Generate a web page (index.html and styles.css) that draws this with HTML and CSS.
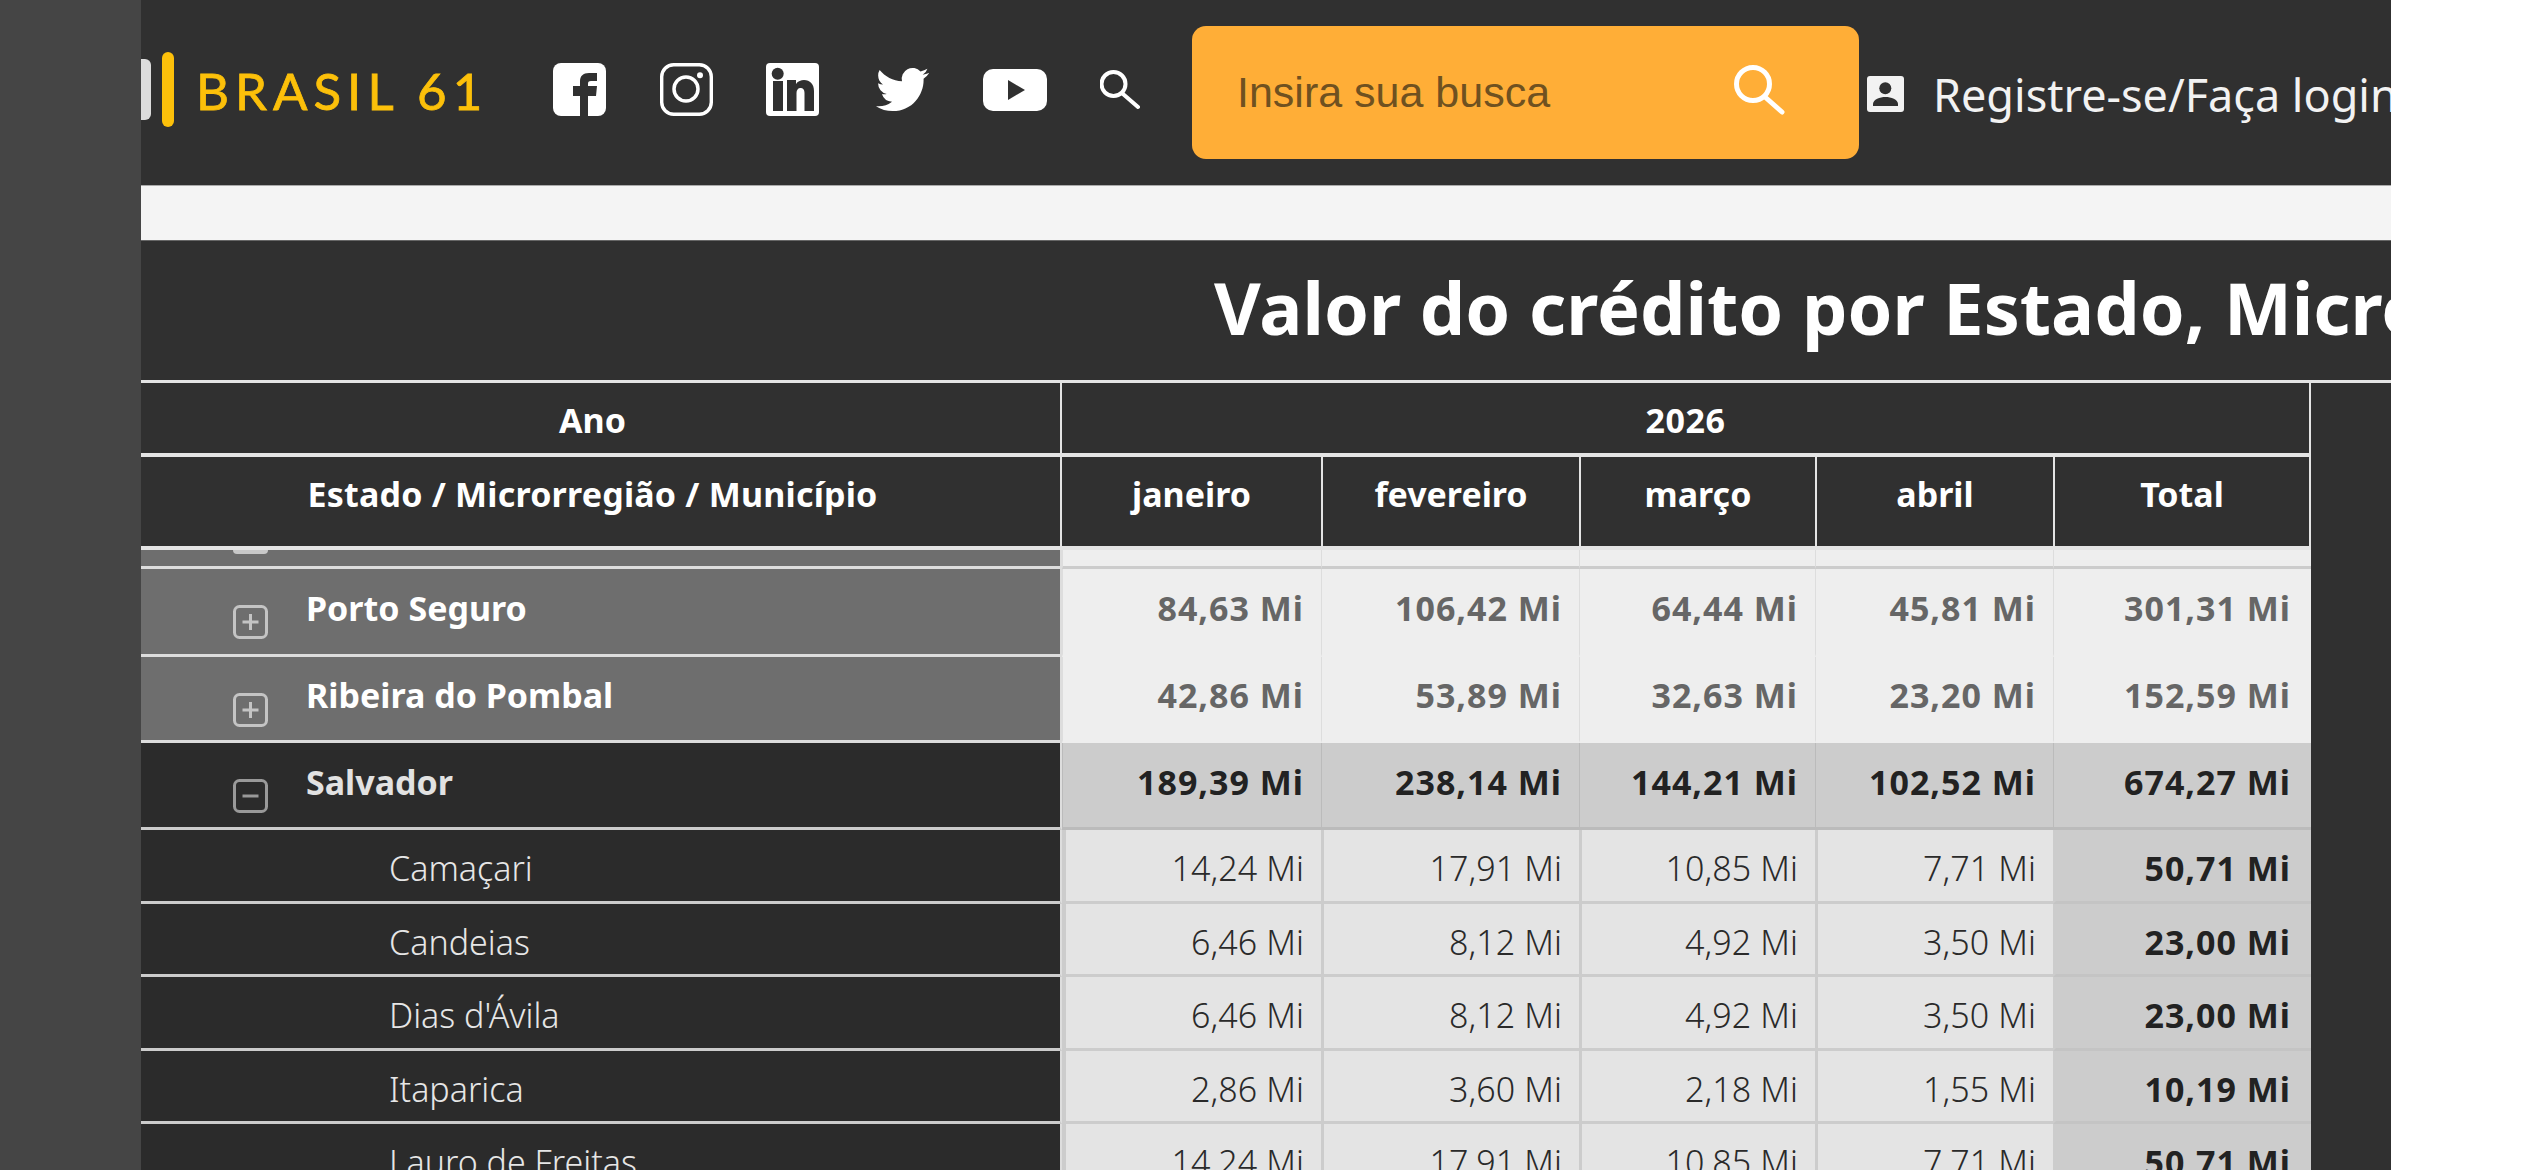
FILE: index.html
```html
<!DOCTYPE html>
<html lang="pt-BR">
<head>
  <meta charset="UTF-8" />
  <title>Brasil 61 - Valor do crédito</title>
  <link rel="stylesheet" href="styles.css">
</head>
<body>

<div class="sidebar"></div>

<div class="main">
  <header class="topbar">
    <div class="logo">
      <span class="logo-gray"></span>
      <span class="logo-yellow"></span>
      <span class="logo-text">BRASIL 61</span>
    </div>

    <svg class="icon" viewBox="0 0 53 53"><rect width="53" height="53" rx="8" fill="#fff"/><path fill="#303030" d="M27 53V33h-7V23h7v-5c0-5 3-8 9-8h8v8h-6c-2.500 0-3 1-3 3v2h9l-1 10h-8v20z"/></svg>
    <svg class="icon icon-ig" viewBox="0 0 53 53"><rect x="1.700" y="1.700" width="49.600" height="49.600" rx="12" fill="none" stroke="#fff" stroke-width="3.400"/><circle cx="26" cy="26" r="12" fill="none" stroke="#fff" stroke-width="3.500"/><circle cx="40" cy="12.300" r="3" fill="#fff"/></svg>
    <svg class="icon" viewBox="0 0 53 53"><rect width="53" height="53" rx="4" fill="#fff"/><circle cx="11.700" cy="10.700" r="6" fill="#303030"/><path fill="#303030" d="M7 18h10v30H7zM21 17h9v4c2-3 5-4 8-4 6 0 10 4 10 11v20h-9.500V30c0-4-2-5-4-5-2.500 0-4 2-4 5v18H21z"/></svg>
    <svg class="icon icon-tw" viewBox="0 0 24 24"><path fill="#fff" d="M23.953 4.570a10 10 0 01-2.825.775 4.958 4.958 0 002.163-2.723c-.951.555-2.005.959-3.127 1.184a4.920 4.920 0 00-8.384 4.482C7.690 8.095 4.067 6.130 1.640 3.162a4.822 4.822 0 00-.666 2.475c0 1.710.870 3.213 2.188 4.096a4.904 4.904 0 01-2.228-.616v.060a4.923 4.923 0 003.946 4.827 4.996 4.996 0 01-2.212.085 4.936 4.936 0 004.604 3.417 9.867 9.867 0 01-6.102 2.105c-.390 0-.779-.023-1.170-.067a13.995 13.995 0 007.557 2.209c9.053 0 13.998-7.496 13.998-13.985 0-.210 0-.420-.015-.630A9.935 9.935 0 0024 4.590z"/></svg>
    <svg class="icon-yt" viewBox="0 0 64 42"><rect width="64" height="42" rx="10" fill="#fff"/><path fill="#303030" d="M25 11l17 10-17 10z"/></svg>
    <svg class="icon-search" viewBox="0 0 40 40"><circle cx="13.500" cy="14" r="12" fill="none" stroke="#fff" stroke-width="4"/><path d="M23 24l15 13" stroke="#fff" stroke-width="4" stroke-linecap="round"/></svg>

    <div class="search-box">
      <span class="search-text">Insira sua busca</span>
      <svg class="search-btn" viewBox="0 0 52 52"><circle cx="19" cy="19" r="16.500" fill="none" stroke="#fff" stroke-width="5"/><path d="M31 32l17 15" stroke="#fff" stroke-width="5" stroke-linecap="round"/></svg>
    </div>

    <div class="login">
      <svg class="icon-user" viewBox="0 0 37 36"><rect width="37" height="36" rx="3" fill="#f2f2f2"/><circle cx="18.300" cy="12.300" r="6" fill="#303030"/><path fill="#303030" d="M6 30v-2c0-4.500 7-7 12.500-7S31 23.500 31 28v2z"/></svg>
      <span>Registre-se/Faça login</span>
    </div>
  </header>

  <div class="strip"></div>

  <h1 class="title">Valor do crédito por Estado, Microrregião e Município</h1>

  <table class="grid">
    <colgroup>
      <col class="col-name"><col class="col-a"><col class="col-b"><col class="col-c"><col class="col-d"><col class="col-e">
    </colgroup>
    <thead>
      <tr class="head-year">
        <th class="first">Ano</th>
        <th colspan="5" class="last year">2026</th>
      </tr>
      <tr class="head-month">
        <th class="first path">Estado / Microrregião / Município</th>
        <th>janeiro</th>
        <th class="sep">fevereiro</th>
        <th class="sep">março</th>
        <th class="sep">abril</th>
        <th class="sep last">Total</th>
      </tr>
    </thead>
    <tbody>
      <tr class="row-cut micro">
        <td class="name"><div class="stub"></div></td>
        <td class="val"></td><td class="val"></td><td class="val"></td><td class="val"></td><td class="val total"></td>
      </tr>
      <tr class="tall micro">
        <td class="name"><div class="name-in"><svg class="toggle" viewBox="0 0 35 34"><rect x="1.500" y="1.500" width="32" height="31" rx="5"/><path d="M17.500 9v16M9.500 17h16"/></svg><span>Porto Seguro</span></div></td>
        <td class="val">84,63 Mi</td><td class="val">106,42 Mi</td><td class="val">64,44 Mi</td><td class="val">45,81 Mi</td><td class="val total">301,31 Mi</td>
      </tr>
      <tr class="mid micro">
        <td class="name"><div class="name-in"><svg class="toggle" viewBox="0 0 35 34"><rect x="1.500" y="1.500" width="32" height="31" rx="5"/><path d="M17.500 9v16M9.500 17h16"/></svg><span>Ribeira do Pombal</span></div></td>
        <td class="val">42,86 Mi</td><td class="val">53,89 Mi</td><td class="val">32,63 Mi</td><td class="val">23,20 Mi</td><td class="val total">152,59 Mi</td>
      </tr>
      <tr class="mid open">
        <td class="name"><div class="name-in"><svg class="toggle" viewBox="0 0 35 34"><rect x="1.500" y="1.500" width="32" height="31" rx="5"/><path d="M9.500 17h16"/></svg><span>Salvador</span></div></td>
        <td class="val">189,39 Mi</td><td class="val">238,14 Mi</td><td class="val">144,21 Mi</td><td class="val">102,52 Mi</td><td class="val total">674,27 Mi</td>
      </tr>
      <tr class="city">
        <td class="name">Camaçari</td>
        <td class="val">14,24 Mi</td><td class="val">17,91 Mi</td><td class="val">10,85 Mi</td><td class="val">7,71 Mi</td><td class="val total">50,71 Mi</td>
      </tr>
      <tr class="city">
        <td class="name">Candeias</td>
        <td class="val">6,46 Mi</td><td class="val">8,12 Mi</td><td class="val">4,92 Mi</td><td class="val">3,50 Mi</td><td class="val total">23,00 Mi</td>
      </tr>
      <tr class="city">
        <td class="name">Dias d'Ávila</td>
        <td class="val">6,46 Mi</td><td class="val">8,12 Mi</td><td class="val">4,92 Mi</td><td class="val">3,50 Mi</td><td class="val total">23,00 Mi</td>
      </tr>
      <tr class="city">
        <td class="name">Itaparica</td>
        <td class="val">2,86 Mi</td><td class="val">3,60 Mi</td><td class="val">2,18 Mi</td><td class="val">1,55 Mi</td><td class="val total">10,19 Mi</td>
      </tr>
      <tr class="city">
        <td class="name">Lauro de Freitas</td>
        <td class="val">14,24 Mi</td><td class="val">17,91 Mi</td><td class="val">10,85 Mi</td><td class="val">7,71 Mi</td><td class="val total">50,71 Mi</td>
      </tr>
    </tbody>
  </table>
</div>

</body>
</html>
```

FILE: styles.css
```css
html, body {
  height: 100%;
}
body {
  margin: 0;
  display: flex;
  background: #fff;
  font-family: 'Noto Sans', sans-serif;
  overflow: hidden;
}
.sidebar {
  flex: none;
  width: 141px;
  background: #454545;
}
.main {
  flex: none;
  width: 2250px;
  height: 1170px;
  background: #303030;
  overflow: hidden;
}

/* top bar */
.topbar {
  height: 186px;
  box-sizing: border-box;
  display: flex;
  align-items: center;
  gap: 53px;
  padding-bottom: 6px;
  border-bottom: 1px solid #aaa;
  white-space: nowrap;
}
.logo {
  flex: none;
  width: 359px;
  display: flex;
  align-items: center;
}
.logo-gray {
  width: 10px;
  height: 61px;
  background: #dcdcdc;
  border-radius: 0 6px 6px 0;
}
.logo-yellow {
  width: 12px;
  height: 75px;
  margin-left: 11px;
  background: #fcc00a;
  border-radius: 6px;
}
.logo-text {
  margin: 3px 0 0 22px;
  font-family: 'Lato', sans-serif;
  font-size: 51px;
  letter-spacing: 6px;
  line-height: 52px;
  color: #fcc00a;
  -webkit-text-stroke: .8px #fcc00a;
}
.icon {
  flex: none;
  width: 53px;
  height: 53px;
}
.icon-ig {
  margin-left: 1px;
}
.icon-tw {
  margin: 0 1px 0 4px;
}
.icon-yt {
  flex: none;
  width: 64px;
  height: 42px;
}
.icon-search {
  flex: none;
  width: 40px;
  height: 40px;
}
.search-box {
  flex: none;
  width: 667px;
  height: 133px;
  box-sizing: border-box;
  margin: 6px 0 0 -1px;
  padding: 0 73px 0 45px;
  display: flex;
  align-items: center;
  justify-content: space-between;
  background: #ffae37;
  border-radius: 14px;
}
.search-text {
  font-family: 'Liberation Sans', sans-serif;
  font-size: 43px;
  color: #6f5120;
}
.search-btn {
  width: 52px;
  height: 52px;
  margin-top: -4px;
}
.login {
  flex: none;
  margin: 9px 0 0 -45px;
  display: flex;
  align-items: center;
  gap: 29px;
  font-size: 45px;
  color: #f2f2f2;
}
.icon-user {
  width: 37px;
  height: 36px;
}

.strip {
  height: 54px;
  background: #f4f4f4;
}

.title {
  height: 143px;
  box-sizing: border-box;
  margin: 0;
  padding: 16px 0 0 1073px;
  border-top: 1px solid #666;
  border-bottom: 3px solid #e4e4e4;
  font-size: 72px;
  line-height: 100px;
  font-weight: 700;
  color: #fff;
  white-space: nowrap;
}

/* table */
.grid {
  width: 2170px;
  table-layout: fixed;
  border-collapse: separate;
  border-spacing: 0;
  font-size: 34px;
  line-height: 46px;
}
.col-name { width: 921px; }
.col-a { width: 259px; }
.col-b { width: 258px; }
.col-c { width: 236px; }
.col-d { width: 238px; }
.col-e { width: 258px; }

.grid th, .grid td {
  box-sizing: border-box;
  padding: 14px 0 0;
  vertical-align: top;
  overflow: hidden;
  white-space: nowrap;
}
.grid td {
  padding-top: 16px;
}
.grid th {
  background: #303030;
  color: #fff;
  font-weight: 700;
  border-bottom: 4px solid #e4e4e4;
}
.grid th.first {
  padding-right: 16px;
  border-right: 2px solid #e4e4e4;
}
.grid th.sep {
  border-left: 2px solid #e4e4e4;
}
.grid th.last {
  border-right: 2px solid #e4e4e4;
}
.grid th.year {
  letter-spacing: .5px;
}
.grid th.path {
  letter-spacing: .2px;
}
.head-year th { height: 74px; }
.head-month th { height: 93px; }

.name {
  border-right: 2px solid #ddd;
  border-bottom: 3px solid #ddd;
}
.name-in {
  display: flex;
  gap: 38px;
  padding-left: 92px;
}
.toggle {
  flex: none;
  width: 35px;
  height: 34px;
  margin-top: 20px;
  fill: none;
  stroke: #c4c4c4;
  stroke-width: 3;
}
.val {
  padding-right: 17px !important;
  text-align: right;
  font-weight: 700;
  letter-spacing: 1px;
}
.val.total {
  padding-right: 20px !important;
}

.grid .row-cut td { height: 19px; padding: 0; }
.stub {
  width: 35px;
  height: 4px;
  margin-left: 92px;
  background: #c8c8c8;
  border-radius: 0 0 5px 5px;
}
.tall td { height: 88px; }
.mid td { height: 86px; }
.grid .mid.micro td { padding-top: 15px; }
.mid.micro .toggle { margin-top: 21px; }

/* microrregiao fechada */
.micro .name {
  background: #6e6e6e;
  color: #fff;
  font-weight: 700;
}
.micro .val {
  background: #eee;
  color: #666;
  border-left: 1px solid #ddd;
  border-bottom: 3px solid #eee;
}
.row-cut.micro .val { border-bottom-color: #ccc; }

/* microrregiao aberta */
.open td { height: 87px; }
.open .name {
  background: #2b2b2b;
  color: #e2e2e2;
  font-weight: 700;
  border-bottom-color: #ccc;
}
.open .toggle { stroke: #999; }
.open .val {
  background: #ccc;
  color: #222;
  border-left: 1px solid #bbb;
  border-bottom: 3px solid #bbb;
}

/* municipios */
.city td { height: 73.500px; }
.grid .city td { padding-top: 15px; }
.city .name {
  padding-left: 248px;
  background: #2b2b2b;
  color: #e6e6e6;
  font-weight: 300;
  border-bottom-color: #ccc;
}
.city .val {
  background: #e4e4e4;
  color: #2a2a2a;
  font-weight: 300;
  letter-spacing: .1px;
  border-left: 3px solid #ccc;
  border-bottom: 3px solid #ccc;
}
.city .val:nth-child(2) { border-left-width: 4px; }
.city .val.total {
  background: #ccc;
  color: #222;
  font-weight: 700;
  letter-spacing: 1px;
  border-bottom-color: #c4c4c4;
}
```
